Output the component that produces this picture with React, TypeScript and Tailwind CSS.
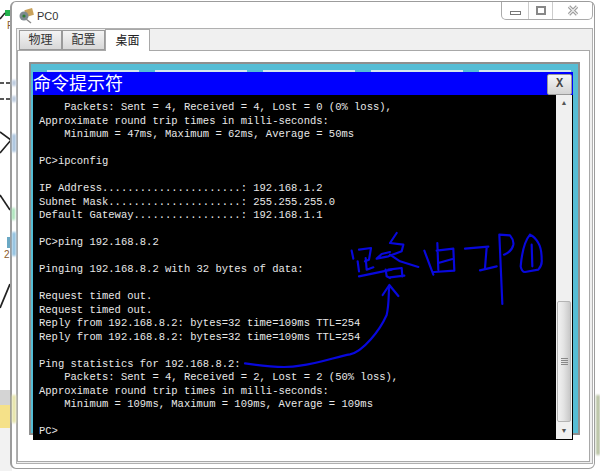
const lines = [
  "    Packets: Sent = 4, Received = 4, Lost = 0 (0% loss),",
  "Approximate round trip times in milli-seconds:",
  "    Minimum = 47ms, Maximum = 62ms, Average = 50ms",
  "",
  "PC>ipconfig",
  "",
  "IP Address......................: 192.168.1.2",
  "Subnet Mask.....................: 255.255.255.0",
  "Default Gateway.................: 192.168.1.1",
  "",
  "PC>ping 192.168.8.2",
  "",
  "Pinging 192.168.8.2 with 32 bytes of data:",
  "",
  "Request timed out.",
  "Request timed out.",
  "Reply from 192.168.8.2: bytes=32 time=109ms TTL=254",
  "Reply from 192.168.8.2: bytes=32 time=109ms TTL=254",
  "",
  "Ping statistics for 192.168.8.2:",
  "    Packets: Sent = 4, Received = 2, Lost = 2 (50% loss),",
  "Approximate round trip times in milli-seconds:",
  "    Minimum = 109ms, Maximum = 109ms, Average = 109ms",
  "",
  "PC>",
];

function Tab({ label, active }: { label: string; active?: boolean }) {
  return (
    <div
      className={
        active
          ? "w-[45px] h-[22px] -mb-px z-10 flex items-center justify-center bg-white border border-b-0 border-[#a8a8a8] text-[12px] text-[#222]"
          : "w-[43px] h-[20px] mt-px flex items-center justify-center bg-gradient-to-b from-[#f4f4f4] to-[#d8d8d8] border border-[#9a9a9a] text-[12px] text-[#333]"
      }
    >
      {label}
    </div>
  );
}

export default function App() {
  return (
    <div className="relative w-[600px] h-[471px] overflow-hidden bg-white pt-px pl-[10px] font-['Liberation_Sans','Noto_Sans_CJK_SC',sans-serif]">
      {/* desktop behind the window */}
      <svg className="absolute left-0 top-0" width="12" height="471" viewBox="0 0 12 471">
        <rect x="5" y="10" width="5" height="6" fill="#22b14c" />
        <path d="M0 19 L5 13" stroke="#222" strokeWidth="1.5" fill="none" />
        <path d="M0 83 H12 M0 99 H12" stroke="#222" strokeWidth="1.5" strokeDasharray="4 2" fill="none" />
        <path d="M0 132 L11 140 L0 153" stroke="#222" strokeWidth="1.6" fill="none" />
        <path d="M0 195 L10 210" stroke="#222" strokeWidth="1.6" fill="none" />
        <path d="M10 284 L0 308" stroke="#222" strokeWidth="1.8" fill="none" />
        <rect x="7" y="237" width="3" height="11" fill="#6aa8c4" />
        <rect x="0" y="390" width="12" height="15" fill="#d4d4d4" />
        <rect x="0" y="405" width="12" height="23" fill="#f5e189" />
        <rect x="0" y="428" width="12" height="43" fill="#f2f2f2" />
      </svg>
      <span className="absolute left-[4px] top-[249px] text-[10px] leading-[12px] text-[#8a5a2b]">2</span>
      <span className="absolute left-[7px] top-[20px] text-[10px] leading-[12px] text-[#8a5a2b]">P</span>

      <div className="relative flex flex-col w-[585px] h-[468px] pl-[4px] pr-px pb-[4px] bg-white border border-l-2 border-[#9c9c9c] rounded-[6px]">
        {/* title row */}
        <div className="flex items-start h-[26px] shrink-0">
          <svg className="mt-[6px] ml-[2px]" width="16" height="16" viewBox="0 0 16 16">
            <rect x="7" y="1" width="8" height="7" fill="#c9a25c" transform="rotate(-15 11 4)" />
            <circle cx="6" cy="8" r="4.5" fill="#7d8a90" />
            <path d="M8 11 L13 15" stroke="#8a8a8a" strokeWidth="1.5" />
            <circle cx="6" cy="8" r="1.6" fill="#2e7d32" />
          </svg>
          <span className="ml-[3px] mt-[6px] text-[11px] leading-[16px] text-[#333]">PC0</span>
          <div className="ml-auto flex h-[18px] w-[92px] items-center border border-t-0 border-[#aaa] rounded-b-[5px]">
            <div className="w-[26px] flex justify-center"><div className="w-[11px] h-[4px] mt-[4px] border border-[#777]" /></div>
            <div className="w-px h-full bg-[#ccc]" />
            <div className="w-[23px] flex justify-center"><div className="w-[10px] h-[9px] border-2 border-[#888]" /></div>
            <div className="w-px h-full bg-[#ccc]" />
            <div className="flex-1 flex justify-center">
              <svg width="12" height="11" viewBox="0 0 12 11" fill="none">
                <path d="M2 1.5 L10 9.5 M10 1.5 L2 9.5" stroke="#999" strokeWidth="3.2" />
                <path d="M2 1.5 L10 9.5 M10 1.5 L2 9.5" stroke="#eee" strokeWidth="1.2" />
              </svg>
            </div>
          </div>
        </div>

        {/* tabs */}
        <div className="flex flex-col flex-1 min-h-0 border border-[#b0b0b0] bg-[#f0f0f0]">
          <div className="flex items-start h-[21px] pl-[2px] shrink-0">
            <Tab label="物理" />
            <Tab label="配置" />
            <Tab label="桌面" active />
          </div>

          <div className="flex-1 min-h-0 bg-white border border-[#a8a8a8] mr-[2px] mb-px pl-[11px] pr-[9px] pt-[11px]">
            <div className="h-[373px] pl-[2px] pr-[5px] pt-[6px] bg-[#55bdd5] border-2 border-[#8f8f8f]">
              {/* desktop icons peeking above the prompt */}
              <div className="flex gap-[16px] h-[2px] pl-[14px]">
                <div className="w-[92px] bg-[#d5e8ec]" />
                <div className="w-[92px] bg-[#d5e8ec]" />
                <div className="w-[92px] bg-[#d5e8ec]" />
                <div className="w-[92px] bg-[#d5e8ec]" />
                <div className="w-[92px] bg-[#d5e8ec]" />
              </div>
              <div className="relative h-[368px] flex flex-col bg-black">
                <div className="flex h-[23px] shrink-0 items-center justify-between bg-[#0000ff]">
                  <span className="text-[18px] leading-none text-white">命令提示符</span>
                  <div className="w-[25px] h-[21px] mt-px mr-px flex items-center justify-center bg-gradient-to-b from-[#f6f6f6] to-[#d4d4d4] border border-[#999] rounded-[2px] font-['Liberation_Mono',monospace] text-[12px] font-bold text-[#444]">
                    X
                  </div>
                </div>
                <div className="flex flex-1 min-h-0 pr-px pb-px">
                  <pre className="flex-1 pl-[6px] pt-[6px] font-['Liberation_Mono',monospace] text-[10.5px] leading-[13.5px] text-[#e8e8e8] whitespace-pre">
                    {lines.join("\n")}
                  </pre>
                  <div className="flex flex-col w-[16px] px-px bg-[#f0f0f0]">
                    <div className="h-[16px] text-center text-[7px] leading-[16px] text-[#555]">▲</div>
                    <div className="flex-1" />
                    <div className="flex items-center justify-center h-[121px] bg-gradient-to-r from-[#f2f2f2] via-[#e2e2e2] to-[#c8c8c8] border border-[#b4b4b4] rounded-[2px]">
                      <div className="flex flex-col gap-px w-[7px]">
                        <div className="h-px bg-[#888]" />
                        <div className="h-px bg-[#888]" />
                        <div className="h-px bg-[#888]" />
                        <div className="h-px bg-[#888]" />
                      </div>
                    </div>
                    <div className="h-[17px] text-center text-[7px] leading-[17px] text-[#555]">▼</div>
                  </div>
                </div>
              </div>
            </div>
          </div>
        </div>
      </div>

      {/* glass glow on the window frame */}
      <svg className="absolute left-0 top-0 blur-[1px]" width="600" height="471" viewBox="0 0 600 471">
        <rect x="12" y="80" width="4" height="6" fill="#b9c9de" />
        <rect x="12" y="96" width="4" height="6" fill="#b9c9de" />
        <rect x="12" y="134" width="4" height="18" fill="#a9c3de" />
        <rect x="12" y="208" width="3" height="12" fill="#9fe0b0" />
        <rect x="12" y="232" width="4" height="24" fill="#8fc0e0" />
        <rect x="12" y="395" width="4" height="28" fill="#e6e4a8" />
        <rect x="596" y="395" width="4" height="60" fill="#b8c2a4" />
      </svg>

      {/* pen annotation */}
      <svg
        className="absolute left-[230px] top-[220px]"
        width="370"
        height="251"
        viewBox="-210 0 1110 753"
        fill="none"
        stroke="#0808dc"
        strokeWidth="6.5"
        strokeLinecap="round"
        strokeLinejoin="round"
      >
        <path d="M155 92 L160 116 M177 89 L213 84 L207 119 L195 124 M197 114 L200 149 L220 142 M173 124 L177 154 M177 169 L275 149" />
        <path d="M290 39 L270 69 L310 74 L305 94 L265 109 L230 116 L245 102 L270 96 M270 104 L300 124 L355 141 M257 149 L260 169 L270 174 M265 149 L305 144 L307 169 M270 172 L313 167" />
        <path d="M373 92 L400 164 M412 69 L415 149 M410 92 L460 86 L463 152 L402 156 M415 129 L460 116" />
        <path d="M495 86 L565 80 M560 82 L555 144 M540 151 L590 139" />
        <path d="M598 44 L607 252 M598 44 L630 46 Q642 60 640 74 Q635 96 612 104" />
        <path d="M690 44 Q668 70 662 139 Q665 156 675 156 L715 149 Q727 135 725 119 Q725 85 715 69 Q705 50 690 44 M695 74 L697 139" />
        <path d="M-165 430 C-100 440 -40 445 0 437 C60 430 110 410 150 403 C190 395 240 330 260 285 C268 250 265 220 268 195 M248 225 L268 195 L295 228" />
      </svg>
    </div>
  );
}
